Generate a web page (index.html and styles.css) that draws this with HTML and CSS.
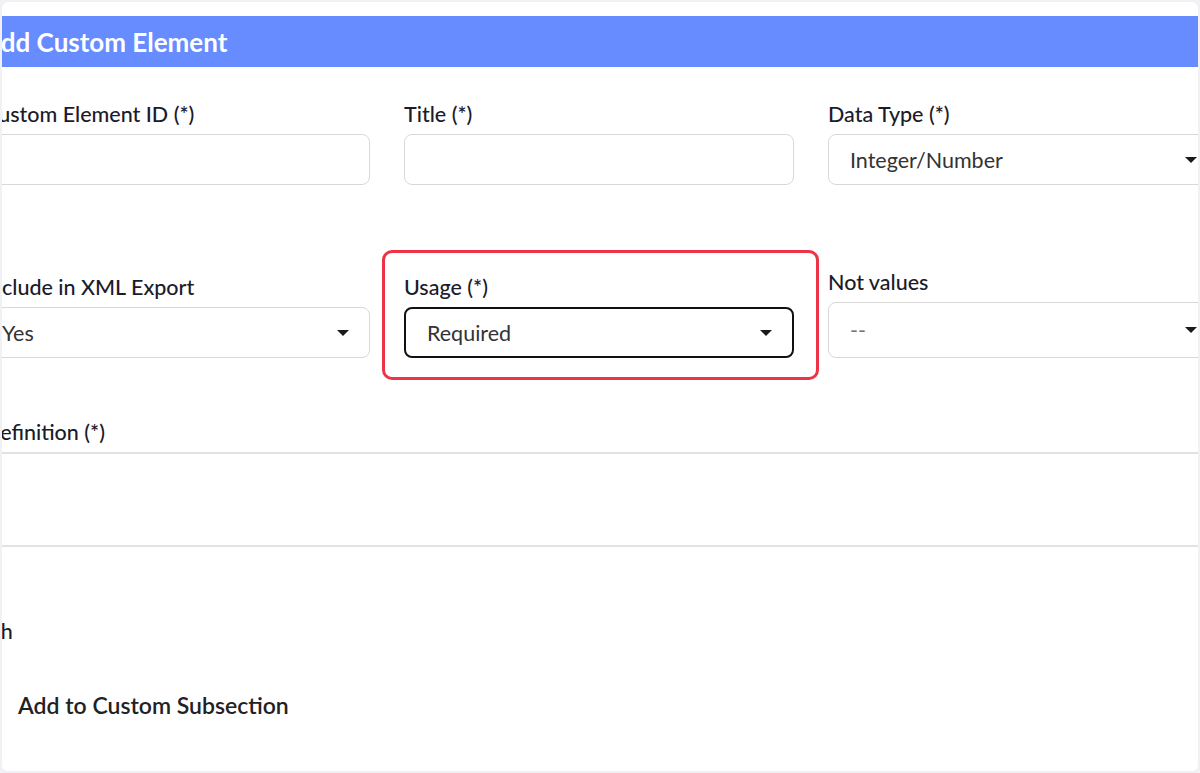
FILE: index.html
```html
<!DOCTYPE html>
<html lang="en">
  <head>
    <meta charset="UTF-8" />
    <meta name="viewport" content="width=device-width, initial-scale=1.0" />
    <title>Add Custom Element</title>
    <link rel="stylesheet" href="styles.css">
  </head>
  <body>
    <div class="frame">
      <div class="dialog">
        <div class="dialog-header">
          <h2>Add Custom Element</h2>
        </div>

        <div class="dialog-body">
          <div class="form-row">
            <div class="field">
              <label>Custom Element ID (*)</label>
              <div class="input"></div>
            </div>
            <div class="field">
              <label>Title (*)</label>
              <div class="input"></div>
            </div>
            <div class="field">
              <label>Data Type (*)</label>
              <div class="select">
                <span>Integer/Number</span>
                <svg viewBox="0 0 12 6" class="caret"><path d="M0 0h12L6 6z" /></svg>
              </div>
            </div>
          </div>

          <div class="form-row row-second">
            <div class="field">
              <label>Include in XML Export</label>
              <div class="select">
                <span>Yes</span>
                <svg viewBox="0 0 12 6" class="caret"><path d="M0 0h12L6 6z" /></svg>
              </div>
            </div>
            <div class="field highlighted">
              <label>Usage (*)</label>
              <div class="select focused">
                <span>Required</span>
                <svg viewBox="0 0 12 6" class="caret"><path d="M0 0h12L6 6z" /></svg>
              </div>
            </div>
            <div class="field field-tall">
              <label>Not values</label>
              <div class="select">
                <span class="placeholder">--</span>
                <svg viewBox="0 0 12 6" class="caret"><path d="M0 0h12L6 6z" /></svg>
              </div>
            </div>
          </div>

          <div class="field definition">
            <label>Definition (*)</label>
            <div class="textarea"></div>
          </div>

          <div class="field length">
            <label>Length</label>
          </div>

          <label class="check-row">
            <span class="checkbox"></span>
            Add to Custom Subsection
          </label>
        </div>
      </div>
    </div>
  </body>
</html>
```

FILE: styles.css
```css
html,
body {
  margin: 0;
  height: 100%;
}

body {
  background: #f1f1f5;
  font-family: "Lato", "Open Sans", sans-serif;
  color: #1b1b2a;
}

.frame {
  position: relative;
  margin: 2px;
  height: 769px;
  background: #fff;
  border-radius: 6px;
  overflow: hidden;
}

.dialog {
  margin-left: -22px;
  padding-top: 14px;
}

.dialog-header {
  height: 51px;
  background: #668cff;
  display: flex;
  align-items: center;
  padding-left: 3px;
}

.dialog-header h2 {
  margin: 0;
  font-size: 26px;
  font-weight: bold;
  color: #fff;
}

.dialog-body {
  padding-top: 35px;
  display: flex;
  flex-direction: column;
}

.form-row {
  display: grid;
  grid-template-columns: 390px 390px 390px;
  column-gap: 34px;
  align-items: end;
}

.row-second {
  margin-top: 85px;
}

.field {
  display: flex;
  flex-direction: column;
  gap: 8px;
}

.field label {
  font-size: 21.5px;
  line-height: 24px;
  font-weight: 500;
  padding-left: 4px;
}

.form-row .field:not(:first-child) label {
  padding-left: 0;
}

.input,
.select {
  height: 51px;
  box-sizing: border-box;
  border: 1.5px solid #d8d8d8;
  border-radius: 8px;
}

.select {
  display: flex;
  align-items: center;
  justify-content: space-between;
  padding: 0 20px 0 21px;
  font-size: 21.5px;
  color: #333;
}

.select .placeholder {
  color: #777;
}

.select .caret {
  width: 12px;
  height: 6px;
  fill: #1a1a1a;
}

.select.focused {
  border: 2px solid #111;
}

.field-tall .select {
  height: 56px;
}

.highlighted {
  position: relative;
}

.highlighted::after {
  content: "";
  position: absolute;
  top: -25px;
  left: -22px;
  right: -25px;
  bottom: -22px;
  border: 3px solid #ef3346;
  border-radius: 10px;
}

.definition {
  margin-top: 62px;
}

.textarea {
  height: 91px;
  margin-left: -40px;
  width: 1300px;
  border-top: 2px solid #e2e2e2;
  border-bottom: 2px solid #e2e2e2;
}

.length {
  margin-top: 72px;
}

.length label {
  margin-left: -36px;
}

.check-row {
  margin-top: 50px;
  display: flex;
  align-items: center;
  gap: 22px;
  font-size: 23px;
  line-height: 24px;
  font-weight: 600;
  color: #222;
}

.checkbox {
  width: 16px;
  height: 16px;
  border: 2px solid #888;
  border-radius: 3px;
  box-sizing: border-box;
}
```
